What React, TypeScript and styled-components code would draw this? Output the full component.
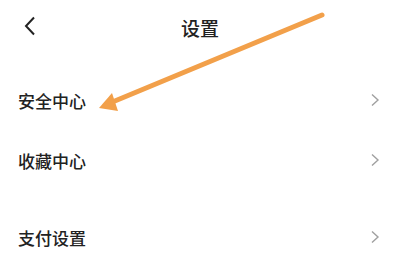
import React from 'react';
import styled, { createGlobalStyle } from 'styled-components';

const GlobalStyle = createGlobalStyle`
    html, body {
        margin: 0;
        padding: 0;
        background: #ffffff;
    }
    body {
        font-family: "Noto Sans CJK SC", "Noto Sans", sans-serif;
        color: #222222;
    }
`;

const Page = styled.div`
    position: relative;
    width: 400px;
    height: 257px;
    overflow: hidden;
    background: #ffffff;
`;

const Header = styled.div`
    display: flex;
    align-items: center;
    justify-content: center;
    position: relative;
    height: 54px;
`;

const BackButton = styled.div`
    position: absolute;
    left: 22px;
    top: 15px;
    width: 16px;
    height: 22px;
    display: flex;
    align-items: center;
    justify-content: center;
`;

const Title = styled.h1`
    margin: 0;
    font-size: 19px;
    font-weight: 500;
    color: #222222;
    line-height: 1;
`;

const List = styled.div`
    display: flex;
    flex-direction: column;
    padding-top: 16px;
`;

const Row = styled.div<{ $gapTop?: number }>`
    display: flex;
    align-items: center;
    justify-content: space-between;
    height: 60px;
    padding: 0 20px 0 18px;
    margin-top: ${(p) => p.$gapTop || 0}px;
`;

const Label = styled.span`
    font-size: 17px;
    font-weight: 500;
    color: #222222;
`;

const Arrow = styled.svg`
    position: absolute;
    left: 0;
    top: 0;
    pointer-events: none;
`;

const items = [
    { label: '安全中心', gap: 0 },
    { label: '收藏中心', gap: 0 },
    { label: '支付设置', gap: 17 },
];

function Chevron() {
    return (
        <svg width="10" height="14" viewBox="0 0 10 14">
            <path d="M2 1.5 L8 7 L2 12.5" fill="none" stroke="#a0a0a0" strokeWidth="1.4" />
        </svg>
    );
}

export default function App() {
    return (
        <Page>
            <GlobalStyle />
            <Header>
                <BackButton>
                    <svg width="12" height="20" viewBox="0 0 12 20">
                        <path d="M10 1.5 L2 10 L10 18.5" fill="none" stroke="#222" strokeWidth="2" />
                    </svg>
                </BackButton>
                <Title>设置</Title>
            </Header>
            <List>
                {items.map((it) => (
                    <Row key={it.label} $gapTop={it.gap}>
                        <Label>{it.label}</Label>
                        <Chevron />
                    </Row>
                ))}
            </List>
            <Arrow width="400" height="257" viewBox="0 0 400 257">
                <line x1="322" y1="15" x2="110" y2="103" stroke="#f2a04a" strokeWidth="5" strokeLinecap="round" />
                <polygon points="99,108 112,93 118,111" fill="#f2a04a" />
            </Arrow>
        </Page>
    );
}
